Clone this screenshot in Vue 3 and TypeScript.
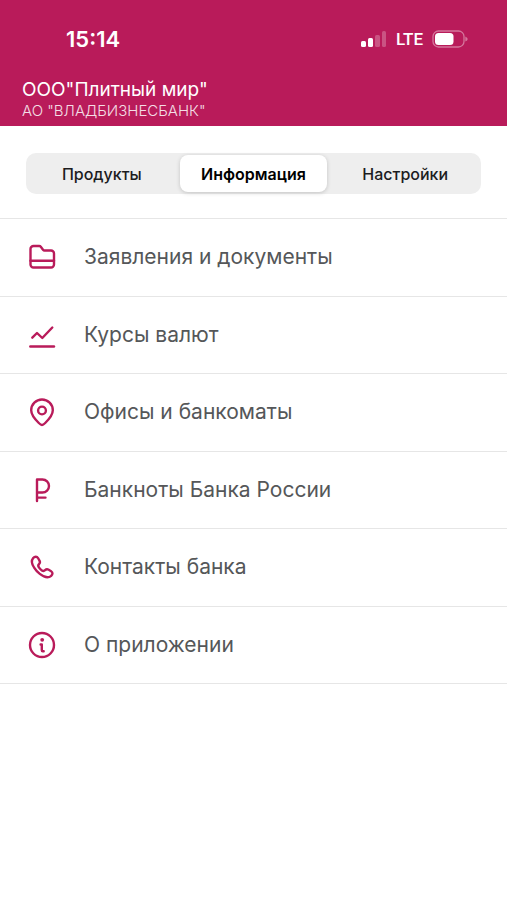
<script setup lang="ts">
import { ref } from 'vue'

type IconName = 'folder' | 'chart' | 'pin' | 'ruble' | 'phone' | 'info'

interface MenuItem {
  icon: IconName
  label: string
}

const tabs: string[] = ['Продукты', 'Информация', 'Настройки']
const activeTab = ref<string>('Информация')

const items: MenuItem[] = [
  { icon: 'folder', label: 'Заявления и документы' },
  { icon: 'chart', label: 'Курсы валют' },
  { icon: 'pin', label: 'Офисы и банкоматы' },
  { icon: 'ruble', label: 'Банкноты Банка России' },
  { icon: 'phone', label: 'Контакты банка' },
  { icon: 'info', label: 'О приложении' },
]
</script>

<template>
  <div class="screen">
    <header class="header">
      <div class="status">
        <span class="time">15:14</span>
        <div class="indicators">
          <svg class="signal" width="26" height="18" viewBox="0 0 26 18" fill="#fff" aria-hidden="true">
            <rect x="0" y="11" width="5" height="6" rx="1.5" />
            <rect x="7" y="8" width="5" height="9" rx="1.5" />
            <rect x="14" y="5" width="5" height="12" rx="1.5" opacity="0.25" />
            <rect x="21" y="1" width="4" height="16" rx="1.5" opacity="0.25" />
          </svg>
          <span class="network">LTE</span>
          <svg class="battery" width="36" height="18" viewBox="0 0 36 18" aria-hidden="true">
            <rect x="1" y="1" width="31" height="16" rx="5.5" fill="none" stroke="#fff" stroke-opacity="0.4" stroke-width="1.3" />
            <rect x="3" y="3" width="18.5" height="12" rx="3.5" fill="#fff" />
            <path d="M33.3 6.5q2.4 1 2.4 2.5t-2.4 2.5z" fill="#fff" fill-opacity="0.4" />
          </svg>
        </div>
      </div>
      <div class="company">
        <h1 class="name">ООО"Плитный мир"</h1>
        <p class="bank">АО "ВЛАДБИЗНЕСБАНК"</p>
      </div>
    </header>

    <nav class="tabs">
      <button
        v-for="tab in tabs"
        :key="tab"
        type="button"
        class="tab"
        :class="{ active: tab === activeTab }"
        @click="activeTab = tab"
      >{{ tab }}</button>
    </nav>

    <ul class="menu">
      <li v-for="item in items" :key="item.icon" class="row">
        <a href="#" class="link" @click.prevent>
          <svg class="icon" width="32" height="32" viewBox="0 0 32 32" aria-hidden="true">
            <g v-if="item.icon === 'folder'">
              <path d="M4.5 8a3 3 0 0 1 3-3h5.7a2 2 0 0 1 1.6.8l2.200 2.900a2 2 0 0 0 1.600.8H25a3 3 0 0 1 3 3v11a3 3 0 0 1-3 3H7.500a3 3 0 0 1-3-3z" />
              <path d="M4.500 19.700H28" />
            </g>
            <g v-else-if="item.icon === 'chart'">
              <path d="M6.300 18.700 11 14l5.300 5L26.300 8.500" />
              <path d="M4.300 27.500H28" />
            </g>
            <g v-else-if="item.icon === 'pin'">
              <path d="M16 29c-1.200 0-2-.8-3.200-2C9 23.300 5.200 19 5.200 14.300a10.800 10.800 0 0 1 21.600 0C26.800 19 23 23.300 19.200 27c-1.200 1.200-2 2-3.200 2z" />
              <circle cx="16" cy="14.500" r="3.900" />
            </g>
            <path v-else-if="item.icon === 'ruble'" d="M11 27V5.500h5.500a6.500 6.500 0 0 1 0 13H11M11 23.600h8.500" />
            <path
              v-else-if="item.icon === 'phone'"
              d="M7.200 7.100C8.700 5.300 11 5.300 12 7l1.500 2.600c.8 1.500.5 2.600-.5 3.600-1 1-1 1.900-.1 3.200.8 1.200 1.800 2.200 3 3 1.300.9 2.200.8 3.200-.2s2.200-1.200 3.600-.4l2.400 1.400c1.800 1.100 1.800 3.100.1 4.600-2.700 2.400-6.800 1.700-11.400-1.900-2.300-1.800-4.200-3.900-5.500-6C5.500 13 5.300 9.400 7.200 7.100z"
            />
            <g v-else>
              <circle cx="16" cy="16" r="12" />
              <circle class="dot" cx="16.200" cy="10.800" r="1.900" />
              <path d="M14.600 15.500h1.200v5.700q0 1 1 1h.9" />
            </g>
          </svg>
          <span class="label">{{ item.label }}</span>
        </a>
      </li>
    </ul>
  </div>
</template>

<style>
body {
  margin: 0;
  background: #fff;
}
</style>

<style scoped>
.screen {
  min-height: 100vh;
  background: #fff;
  font-family: Inter, "Liberation Sans", sans-serif;
}

.header {
  padding: 24px 22px 6px;
  background: #b91b5a;
  color: #fff;
}

.status {
  display: flex;
  align-items: center;
  justify-content: space-between;
  height: 30px;
  padding: 0 17px 0 44px;
}

.time {
  font-size: 22px;
  font-weight: 600;
  line-height: 30px;
}

.indicators {
  display: flex;
  align-items: center;
  gap: 9px;
}

.network {
  font-family: Roboto, sans-serif;
  font-size: 17px;
  font-weight: 500;
  line-height: 20px;
}

.company {
  padding-top: 24px;
}

.name {
  margin: 0;
  font-size: 19px;
  font-weight: 400;
  line-height: 24px;
}

.bank {
  margin: 0;
  font-size: 15px;
  font-weight: 300;
  line-height: 18px;
  opacity: 0.85;
}

.tabs {
  display: grid;
  grid-template-columns: repeat(3, 1fr);
  gap: 4px;
  margin: 27px 26px 24px;
  padding: 2px;
  border-radius: 10px;
  background: #eee;
}

.tab {
  height: 37px;
  padding: 0;
  border: 0;
  border-radius: 8px;
  background: transparent;
  color: #1c1c1e;
  font-family: inherit;
  font-size: 16px;
  font-weight: 500;
}

.tab.active {
  background: #fff;
  color: #000;
  font-weight: 600;
  box-shadow: 0 1px 4px rgba(0, 0, 0, 0.18);
}

.menu {
  display: grid;
  grid-auto-rows: 1fr;
  min-height: 465px;
  margin: 0;
  padding: 0;
  border-top: 1px solid #e6e6e6;
  list-style: none;
}

.row {
  display: grid;
  border-bottom: 1px solid #e6e6e6;
}

.link {
  display: flex;
  align-items: center;
  gap: 26px;
  padding: 0 26px;
  color: #555759;
  text-decoration: none;
}

.icon {
  flex: none;
  fill: none;
  stroke: #b91b5a;
  stroke-width: 2.4;
  stroke-linecap: round;
  stroke-linejoin: round;
}

.dot {
  fill: #b91b5a;
  stroke: none;
}

.label {
  font-size: 21px;
  line-height: 28px;
}
</style>
